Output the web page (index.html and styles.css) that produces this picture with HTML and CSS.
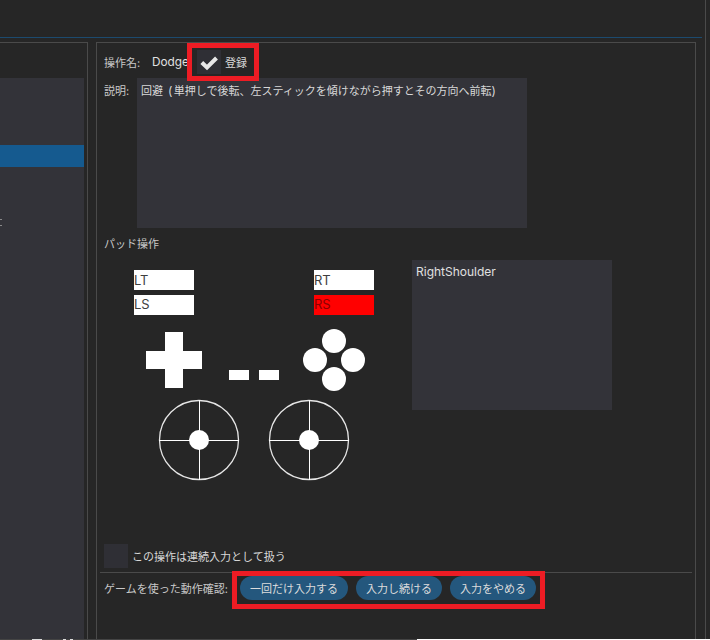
FILE: index.html
```html
<!DOCTYPE html>
<html lang="ja">
<head>
<meta charset="utf-8">
<title>操作設定</title>
<link rel="stylesheet" href="styles.css">
</head>
<body>
<div class="app">
  <div class="topbar"></div>
  <div class="content">
    <aside class="left-panel">
      <div class="list">
        <div class="list-selected"></div>
      </div>
    </aside>
    <main class="right-panel">
      <div class="name-row">
        <span class="label name-label">操作名:</span>
        <span class="name-value">Dodge</span>
        <span class="checkbox">
          <svg width="24" height="24" viewBox="0 0 24 24"><path class="tick" d="M4.8 12.5 L10 17.5 L19.5 8"/></svg>
        </span>
        <span class="check-label">登録</span>
      </div>
      <div class="desc-row">
        <span class="label desc-label">説明:</span>
        <div class="textarea">回避<span class="latin"> (</span>単押しで後転、左スティックを傾けながら押すとその方向へ前転<span class="latin-end">)</span></div>
      </div>
      <div class="pad-title">パッド操作</div>
      <div class="pad-row">
        <svg class="pad" width="290" height="222" viewBox="0 0 290 222">
          <rect class="w" x="30" y="10" width="60" height="20"/>
          <rect class="w" x="30" y="35" width="60" height="20"/>
          <rect class="w" x="210" y="10" width="60" height="20"/>
          <rect class="r" x="210" y="35" width="60" height="20"/>
          <text class="t" x="30" y="25">LT</text>
          <text class="t" x="30" y="49">LS</text>
          <text class="t" x="210" y="25">RT</text>
          <text class="t t-red" x="210" y="49">RS</text>
          <path class="w" d="M61 72h18v19h19v18h-19v19h-18v-19h-19v-18h19z"/>
          <rect class="w" x="125" y="110" width="20" height="10"/>
          <rect class="w" x="155" y="110" width="20" height="10"/>
          <circle class="w" cx="230" cy="81" r="12"/>
          <circle class="w" cx="211" cy="100" r="12"/>
          <circle class="w" cx="249" cy="100" r="12"/>
          <circle class="w" cx="230" cy="119" r="12"/>
          <g class="stick">
            <circle class="ring" cx="95" cy="180" r="39.5"/>
            <path d="M55 180.5h80M95.5 140v80"/>
          </g>
          <circle class="w" cx="95" cy="180" r="10"/>
          <g class="stick">
            <circle class="ring" cx="205" cy="180" r="39.5"/>
            <path d="M165 180.5h80M205.5 140v80"/>
          </g>
          <circle class="w" cx="205" cy="180" r="10"/>
        </svg>
        <div class="pad-info">RightShoulder</div>
      </div>
      <div class="repeat-row">
        <span class="checkbox"></span>
        <span class="repeat-label">この操作は連続入力として扱う</span>
      </div>
      <div class="test-row">
        <span class="test-label">ゲームを使った動作確認:</span>
        <button class="pill">一回だけ入力する</button>
        <button class="pill">入力し続ける</button>
        <button class="pill">入力をやめる</button>
      </div>
    </main>
  </div>
  <div class="mark mark-check"></div>
  <div class="mark mark-buttons"></div>
  <div class="speck speck-a"></div>
  <div class="speck speck-b"></div>
</div>
<div class="bottom-strip">
  <div class="strip-dark"></div>
</div>
</body>
</html>
```
FILE: styles.css
```css
* { box-sizing: border-box; }
html, body { margin: 0; padding: 0; }
body {
  width: 710px;
  height: 640px;
  overflow: hidden;
  background: #262626;
  color: #d8d8d8;
  font-family: "Inter", "Noto Sans CJK JP", sans-serif;
  font-size: 11px;
}
.app {
  position: relative;
  width: 706px;
  height: 639px;
  overflow: hidden;
  border-right: 1px solid #4a4a4a;
}
.topbar { height: 38px; width: 702px; border-bottom: 1px solid #1c4a6e; }
.content { display: flex; padding-top: 4px; height: 601px; }
.left-panel {
  width: 88px;
  height: 597px;
  margin-right: 8px;
  padding-top: 35px;
  border-top: 1px solid #4a4a4a;
  border-right: 1px solid #4a4a4a;
}
.list { width: 84px; height: 561px; background: #333339; padding-top: 67px; }
.list-selected { height: 22px; background: #155a8f; }
.right-panel {
  width: 600px;
  height: 597px;
  border: 1px solid #4a4a4a;
  border-bottom: 0;
  padding: 0 7px;
}
.name-row { display: flex; align-items: center; height: 35px; padding-top: 2px; }
.label { color: #c8c8c8; }
.name-label { width: 48px; }
.name-value { width: 45px; color: #e0e0e0; font-size: 11.8px; }
.checkbox { display: block; flex: none; width: 24px; height: 24px; background: #2f2f35; }
.tick { fill: none; stroke: #e8e8e8; stroke-width: 4; }
.check-label { margin-left: 4px; }
.desc-row { display: flex; }
.desc-label { width: 33px; padding-top: 4px; }
.textarea {
  width: 390px;
  height: 150px;
  padding: 4px;
  background: #333339;
}
.latin { font-size: 12px; letter-spacing: 1.5px; }
.latin-end { font-size: 12px; }
.pad-title { margin-top: 7px; height: 25px; color: #c8c8c8; }
.pad-row { display: flex; align-items: flex-start; }
.pad { display: block; flex: none; }
.w { fill: #ffffff; }
.r { fill: #ff0000; }
.t { font-family: "Inter", sans-serif; font-size: 13px; fill: #3f3f3f; }
.t-red { fill: #8a0000; }
.stick { fill: none; stroke: #ffffff; stroke-width: 1; }
.ring { stroke: #e6e6e6; stroke-width: 1.3; }
.pad-info {
  width: 200px;
  height: 150px;
  margin-left: 18px;
  padding: 4px;
  background: #333339;
  color: #e0e0e0;
  font-size: 12px;
}
.repeat-row { display: flex; align-items: center; margin-top: 62px; height: 24px; }
.repeat-label { margin-left: 4px; }
.test-row {
  display: flex;
  align-items: center;
  gap: 8px;
  margin: 4px 0 0 -4px;
  padding: 3px 0 0 4px;
  width: 592px;
  border-top: 1px solid #4a4a4a;
}
.test-label { width: 128px; color: #c8c8c8; }
.pill {
  flex: none;
  height: 24px;
  padding: 0 10px;
  border: 0;
  border-radius: 12px;
  background: #24577d;
  color: #dcdcdc;
  font: inherit;
}
.mark { position: absolute; border: 5px solid #ed1c24; }
.mark-check { left: 187px; top: 43px; width: 72px; height: 38px; }
.mark-buttons { left: 232px; top: 571px; width: 313px; height: 38px; }
.speck { position: absolute; left: 0; width: 2px; height: 1px; background: #8a8a8a; }
.speck-a { top: 219px; }
.speck-b { top: 225px; }
.bottom-strip { height: 1px; background: #ffffff; }
.strip-dark {
  width: 417px;
  height: 1px;
  background: linear-gradient(90deg, #444444 32px, #dddddd 32px 42px, #444444 42px 63px, #dddddd 63px 66px, #444444 66px 70px, #dddddd 70px 73px, #444444 73px);
}
```
